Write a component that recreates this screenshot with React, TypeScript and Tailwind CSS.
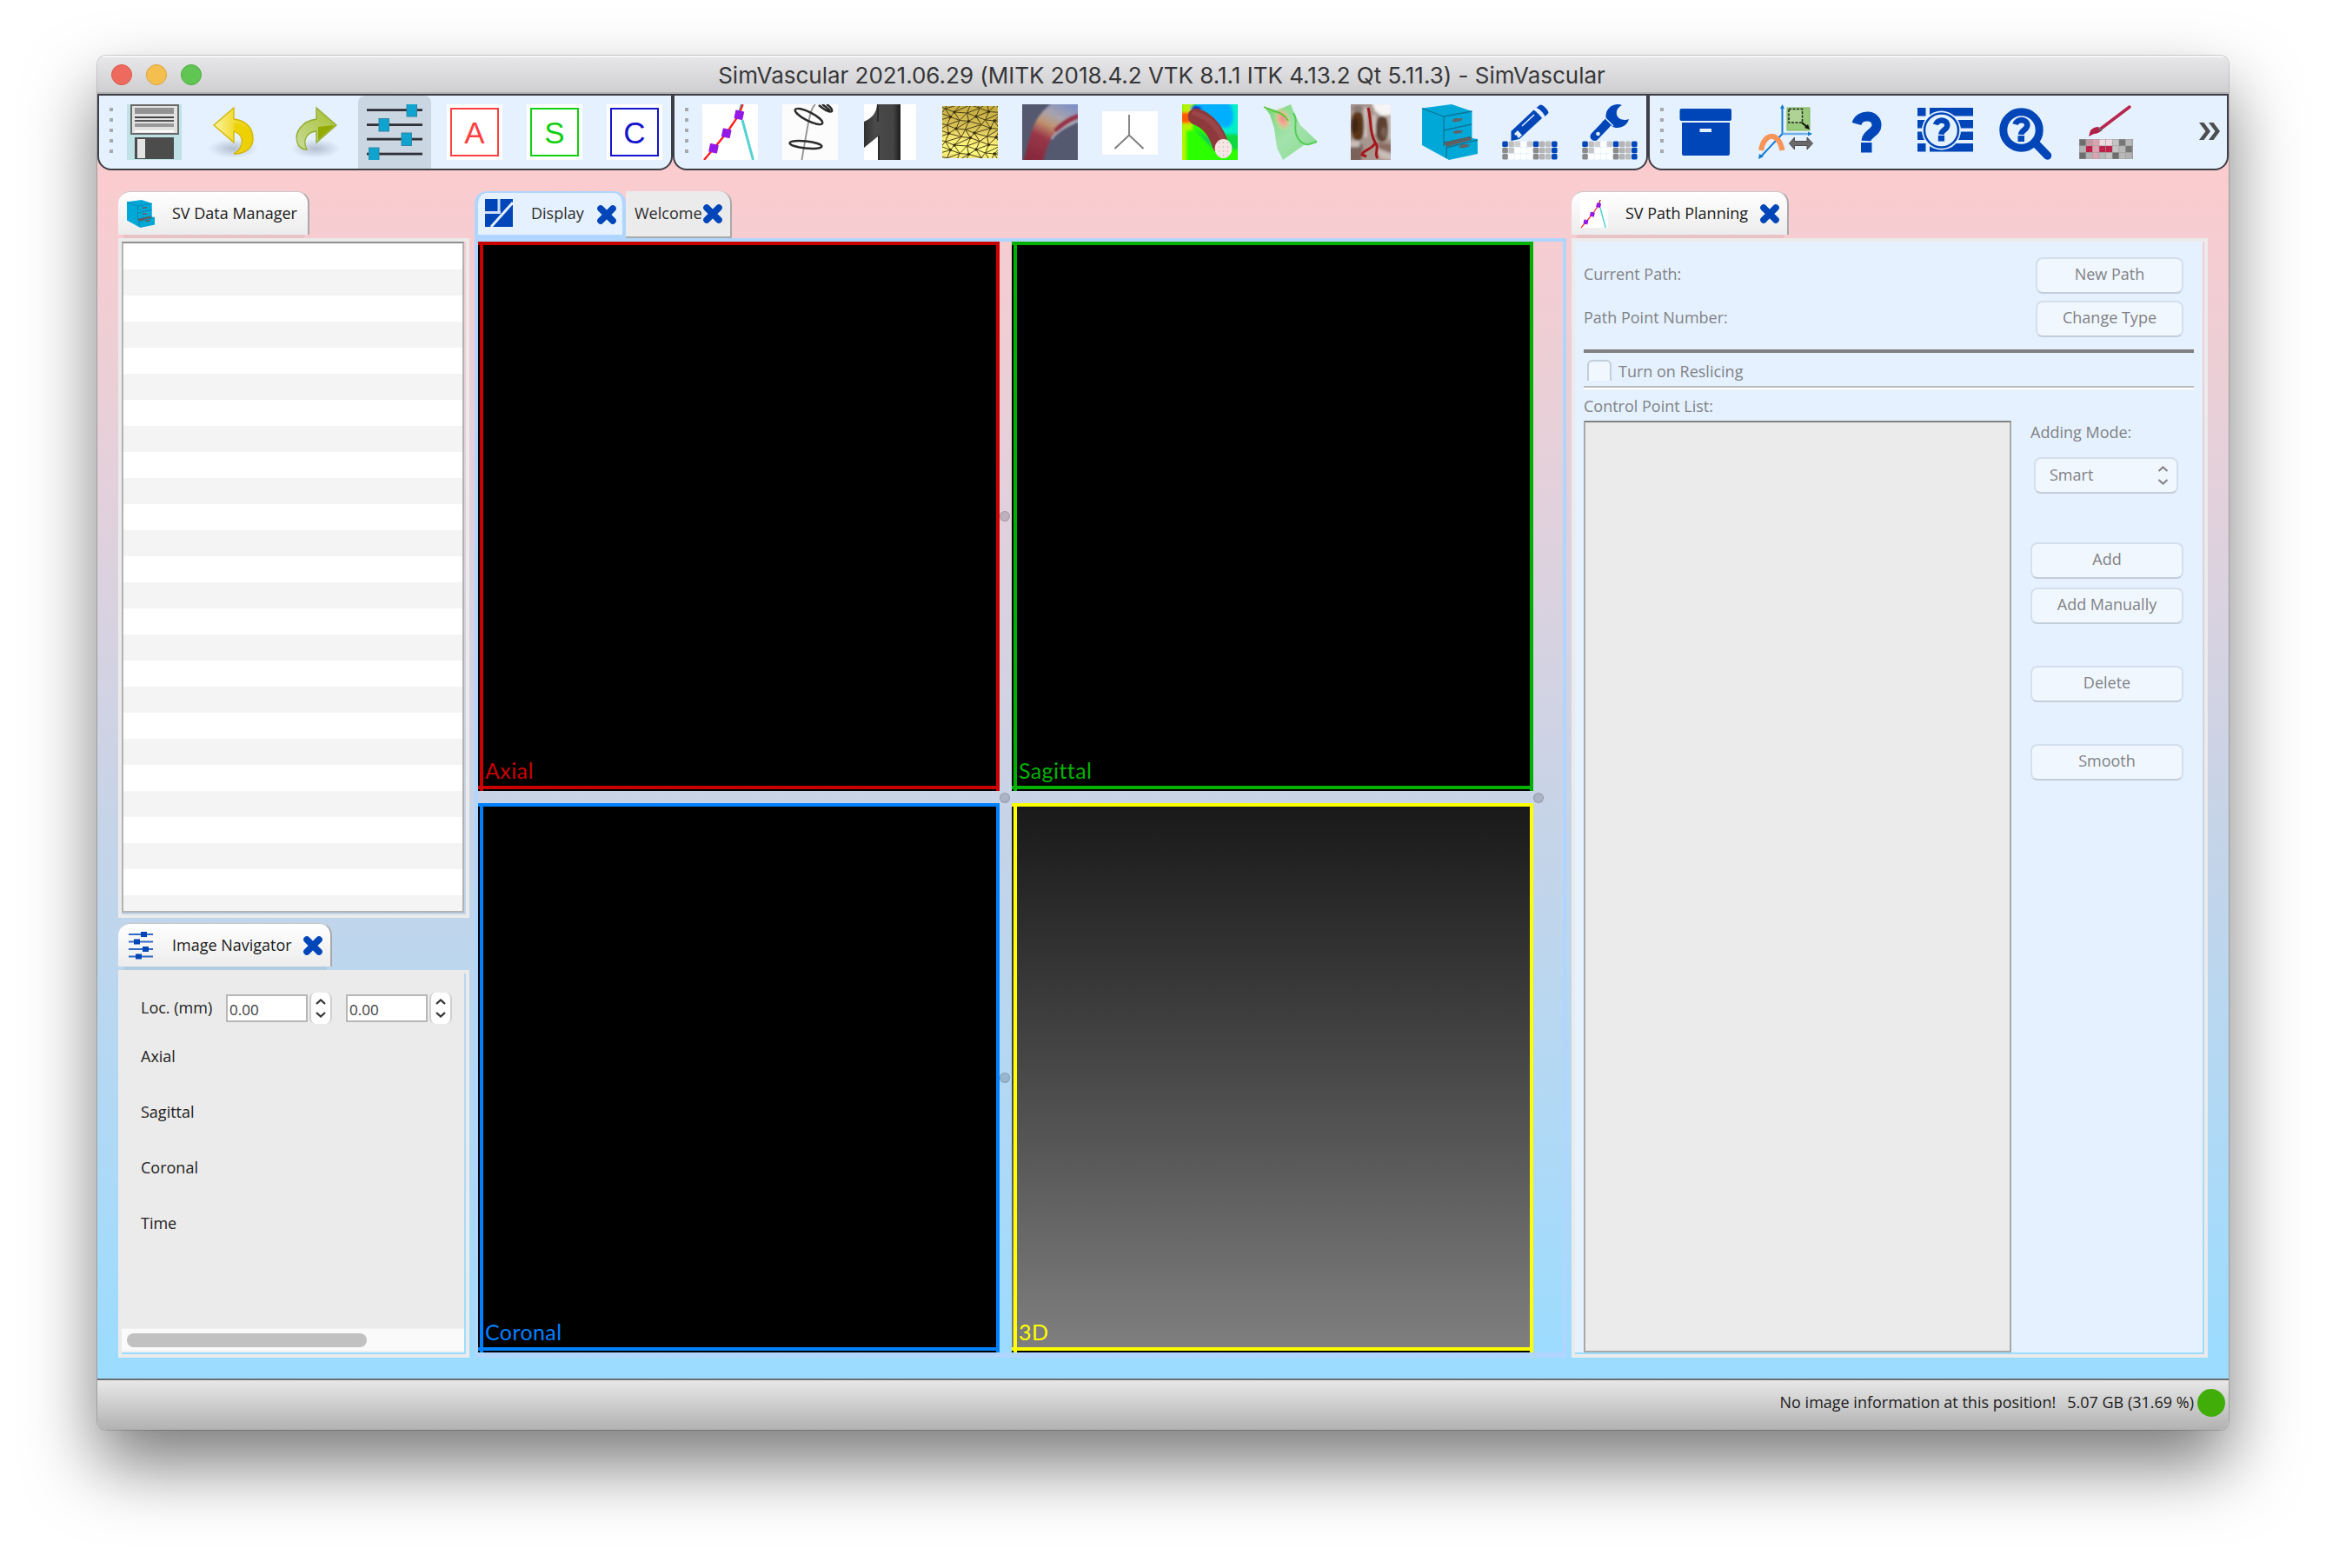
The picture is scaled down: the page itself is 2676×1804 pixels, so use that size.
import React from "react";

const BLUE = "#0046b8";

function Svg({ children, w = 64, h = 64, vb }: { children: React.ReactNode; w?: number; h?: number; vb?: string }) {
  return (
    <svg width={w} height={h} viewBox={vb ?? `0 0 ${w} ${h}`} className="block shrink-0">
      {children}
    </svg>
  );
}

/* ---------- toolbar icons ---------- */

const SaveIcon = () => (
  <Svg>
    <rect width="63" height="64" fill="#bfe2e6" />
    <rect x="5" y="1" width="54" height="33" fill="#e2e2e2" stroke="#6a6a6a" strokeWidth="2" />
    <rect x="9" y="4" width="45" height="7" fill="#929292" />
    <rect x="9" y="14" width="45" height="2" fill="#444" />
    <rect x="9" y="18" width="45" height="2" fill="#555" />
    <rect x="9" y="22" width="45" height="4" fill="#999" />
    <rect x="9" y="30" width="45" height="2" fill="#fff" />
    <rect x="9" y="38" width="45" height="25" fill="#4c4c4c" />
    <rect x="12" y="40" width="9" height="22" fill="#e4e4e4" />
  </Svg>
);

const UndoIcon = () => (
  <Svg>
    <defs>
      <radialGradient id="us"><stop offset="0" stopColor="#8b98a8" stopOpacity=".55" /><stop offset="1" stopColor="#8b98a8" stopOpacity="0" /></radialGradient>
      <linearGradient id="ug" x1="0" y1="0" x2="1" y2="0"><stop offset="0" stopColor="#fdf4a0" /><stop offset=".5" stopColor="#f2dc38" /><stop offset="1" stopColor="#e8cf00" /></linearGradient>
    </defs>
    <ellipse cx="30" cy="51" rx="29" ry="11" fill="url(#us)" />
    <path d="M8 24 L31 4 V17 C46 19 54 28 53 42 C52 51 43 57 31 57 C42 51 45 36 31 31 V44 Z" fill="url(#ug)" stroke="#d2b400" strokeWidth="1.3" />
    <path d="M31 31 C43 34 46 47 36 55 C48 52 52 44 51 36 C48 26 42 22 31 22 Z" fill="#ecd000" opacity=".8" />
  </Svg>
);

const RedoIcon = () => (
  <Svg>
    <defs>
      <radialGradient id="rs"><stop offset="0" stopColor="#8b98a8" stopOpacity=".55" /><stop offset="1" stopColor="#8b98a8" stopOpacity="0" /></radialGradient>
      <linearGradient id="rg" x1="0" y1="1" x2="1" y2="0"><stop offset="0" stopColor="#c9dc9a" /><stop offset="1" stopColor="#a5bf2b" /></linearGradient>
    </defs>
    <ellipse cx="33" cy="51" rx="29" ry="11" fill="url(#rs)" />
    <path d="M57 24 L34 4 V17 C18 19 8 32 12 44 C14 50 18 52 23 52 C18 42 22 32 34 31 V44 Z" fill="url(#rg)" stroke="#93ab2e" strokeWidth="1.3" />
    <path d="M55 24 L36 41 V26 Z" fill="#93ab00" />
  </Svg>
);

const SlidersIcon = () => (
  <Svg>
    {[[6.5, 46], [23.5, 14], [40, 40], [57, 2.5]].map(([y, x]) => (
      <g key={y}>
        <rect x="0" y={y - 1.3} width="64" height="2.8" fill="#2e3136" />
        <rect x={x} y={y - 7} width="11.5" height="14.5" fill="#0fa4cf" stroke="#2d86a5" strokeWidth="1" />
      </g>
    ))}
  </Svg>
);

function LetterIcon({ letter, color }: { letter: string; color: string }) {
  return (
    <div className="flex h-16 w-16 shrink-0 bg-white p-1">
      <div
        className="flex flex-1 items-center justify-center border-2 font-['Liberation_Sans',sans-serif] text-[35px] leading-none"
        style={{ borderColor: color, color }}
      >
        {letter}
      </div>
    </div>
  );
}

const PathShape = ({ s = 1 }: { s?: number }) => (
  <Svg w={64 * s} h={64 * s} vb="0 0 64 64">
    <rect width="64" height="64" fill="#fff" />
    <path d="M46 18 L53 44 L58.5 64 M45 0 L43 8" stroke="#55d2d2" strokeWidth="3" fill="none" />
    <path d="M2 64 L13 51 L27.5 33.5 L42 12.5 L46.5 0" stroke="#ff2020" strokeWidth="2.4" fill="none" />
    {[[13, 50.7], [27.7, 33.3], [42.3, 12.3]].map(([x, y]) => (
      <rect key={x} x={x - 5} y={y - 5} width="10" height="10" rx="1" fill="#9418e6" transform={`rotate(12 ${x} ${y})`} />
    ))}
  </Svg>
);

const SegIcon = () => (
  <Svg>
    <rect width="64" height="64" fill="#fcfcfc" />
    <path d="M38 0 C33 4 30.500 18 28 32 C26 44 24 54 22.500 64" stroke="#999" strokeWidth="2" fill="none" />
    <g fill="none" stroke="#2b2b2b" strokeWidth="2.500">
      <ellipse cx="30.500" cy="14" rx="17.500" ry="5" transform="rotate(27 30.500 14)" />
      <ellipse cx="27" cy="46.500" rx="18.500" ry="4" transform="rotate(6 27 46.500)" />
      <path d="M42 1 C48 6 54 10 57 8 C58 5 54 2 51 0 M46 0 L55 7" />
    </g>
  </Svg>
);

const ModelIcon = () => (
  <Svg>
    <defs>
      <linearGradient id="mg"><stop offset="0" stopColor="#303030" /><stop offset=".3" stopColor="#4a4a4a" /><stop offset=".8" stopColor="#444" /><stop offset="1" stopColor="#1c1c1c" /></linearGradient>
    </defs>
    <rect x="2" width="60" height="64" fill="#fff" />
    <path d="M2 20 C10 16 16 12 17 0 H44 V64 H18 V37 L2 50 Z" fill="url(#mg)" />
    <path d="M19 36 V64 M18 0 V20" stroke="#222" strokeWidth="1.500" />
  </Svg>
);

const meshPts = Array.from({ length: 9 }, (_, r) =>
  Array.from({ length: 8 }, (_, c) => [c * 11.500 - 9 + ((r * 5 + c * 3) % 4) + (r % 2) * 5, r * 9.500 - 18 + c * 3 + ((r * 3 + c * 7) % 3)]),
);

const MeshIcon = () => (
  <Svg>
    <defs>
      <linearGradient id="meg" x1=".6" y1="0" x2=".5" y2="1"><stop offset="0" stopColor="#c4ab40" /><stop offset=".45" stopColor="#dcc658" /><stop offset=".6" stopColor="#f4e270" /><stop offset=".85" stopColor="#ffff80" /><stop offset="1" stopColor="#f4e474" /></linearGradient>
      <clipPath id="mec"><rect y="2" width="64" height="60" /></clipPath>
    </defs>
    <g clipPath="url(#mec)">
      <rect y="2" width="64" height="60" fill="url(#meg)" />
      {meshPts.map((row, r) =>
        row.map(([x, y], c) => (
          <g key={`${r}-${c}`} stroke="#4a401a" strokeWidth="1" fill="none">
            {c < 7 && <path d={`M${x} ${y}L${row[c + 1][0]} ${row[c + 1][1]}`} />}
            {r < 8 && <path d={`M${x} ${y}L${meshPts[r + 1][c][0]} ${meshPts[r + 1][c][1]}`} />}
            {r < 8 && c > 0 && <path d={`M${x} ${y}L${meshPts[r + 1][c - 1][0]} ${meshPts[r + 1][c - 1][1]}`} />}
            {(r + c) % 2 === 0 && <circle cx={x} cy={y} r="1.300" fill="#221c08" />}
          </g>
        )),
      )}
    </g>
  </Svg>
);

const SimIcon = () => (
  <Svg>
    <defs>
      <linearGradient id="sg" x1=".25" y1="1" x2=".7" y2="0"><stop offset="0" stopColor="#84283c" /><stop offset=".38" stopColor="#983648" /><stop offset=".58" stopColor="#c0936f" /><stop offset=".74" stopColor="#a9a4ac" /><stop offset="1" stopColor="#7f8fc4" /></linearGradient>
      <filter id="sb"><feGaussianBlur stdDeviation="1.300" /></filter>
      <clipPath id="sc"><rect width="64" height="64" /></clipPath>
    </defs>
    <g clipPath="url(#sc)">
      <rect width="64" height="64" fill="#555970" />
      <g filter="url(#sb)">
        <path d="M1 68 C6 50 10 22 24 8 C30 2 34 -2 38 -4 H68 V17 C52 24 38 30 32 42 C28 50 26 60 23 68 Z" fill="url(#sg)" />
        <path d="M66 13 C54 17 46 22 38 31" stroke="#97304a" strokeWidth="6" fill="none" />
        <path d="M66 19 C50 25 40 31 34 40" stroke="#b9bccb" strokeWidth="1.800" fill="none" />
      </g>
    </g>
  </Svg>
);

const AxesIcon = () => (
  <Svg>
    <rect y="8" width="64" height="50" fill="#fff" />
    <path d="M31 12 V35.500 L14.500 51 M31 35.500 L47.500 51" stroke="#7c7c7c" strokeWidth="1.800" fill="none" />
  </Svg>
);

const FlowIcon = () => (
  <Svg>
    <defs><clipPath id="fc"><rect width="64" height="64" /></clipPath><filter id="fb"><feGaussianBlur stdDeviation="1.600" /></filter></defs>
    <g clipPath="url(#fc)">
      <rect width="64" height="64" fill="#2cff00" />
      <g filter="url(#fb)">
        <path d="M0 -2 H12 V30 H5 V66 H-2 Z" fill="#b6f400" />
        <path d="M-2 9 H10 V22 H-2 Z" fill="#ff5a00" />
        <path d="M14 -3 H68 V36 H36 Z" fill="#00efc8" />
        <path d="M66 34 H40 L52 52 H66 Z" fill="#10d840" />
        <path d="M20 -3 H54 C62 10 60 24 52 27 C40 28 26 14 20 8 Z" fill="#00b0ff" />
        <ellipse cx="16" cy="5" rx="6" ry="4" fill="#0030e0" />
        <path d="M14 28 L36 52 L32 40 Z" fill="#10c85c" />
      </g>
      <path d="M16 14 C30 19 40 32 44 47" stroke="#8e393c" strokeWidth="19" strokeLinecap="round" fill="none" />
      <path d="M14 10 C32 16 43 28 48 44" stroke="#a25052" strokeWidth="6" strokeLinecap="round" fill="none" opacity=".6" />
      <ellipse cx="47.500" cy="51" rx="10" ry="11" fill="#f6e6e6" />
      {[0, 1, 2, 3].map((r) => [0, 1, 2].map((c) => <circle key={`${r}${c}`} cx={42.500 + c * 5} cy={44 + r * 5} r=".8" fill="#d8aeb0" />))}
    </g>
  </Svg>
);

const SheetIcon = () => (
  <Svg>
    <defs>
      <linearGradient id="shg" x1="0" y1="0" x2="1" y2="1"><stop offset="0" stopColor="#74d674" /><stop offset=".5" stopColor="#a4e2ae" /><stop offset="1" stopColor="#86dd8c" /></linearGradient>
      <radialGradient id="shr"><stop offset="0" stopColor="#ea8f8f" /><stop offset=".45" stopColor="#ecb290" /><stop offset="1" stopColor="#cfe59a" stopOpacity="0" /></radialGradient>
    </defs>
    <path d="M2 2.500 L17 7 L33 0 L37 10 L44 24 L64 43 L48 47 L24 64 L17 50 L14 28 L9 12 Z" fill="url(#shg)" />
    <ellipse cx="23.500" cy="17" rx="10" ry="15" fill="url(#shr)" transform="rotate(-20 23.500 17)" />
    <path d="M2 3 L14 8 C20 9 27 13 30 19" stroke="#5fc43a" strokeWidth="1.800" fill="none" />
    <path d="M36 10 C42 20 36 22 39 34 C42 43 48 47 54 46 L63 43" stroke="#53cc52" strokeWidth="2" fill="none" />
  </Svg>
);

const TissueIcon = () => (
  <div className="flex h-16 w-16 shrink-0 justify-center pl-[2px]">
    <Svg w={46}>
      <defs><filter id="tb"><feGaussianBlur stdDeviation="1.500" /></filter><clipPath id="tc"><rect width="46" height="64" /></clipPath></defs>
      <g clipPath="url(#tc)">
        <rect width="46" height="64" fill="#a8978f" />
        <g filter="url(#tb)">
          <path d="M24 -2 H48 V12 L36 14 L28 8 Z" fill="#f6f4f4" />
          <path d="M-2 44 L14 46 L12 66 H-2 Z" fill="#7a625a" />
          <path d="M-2 42 H10 V49 H-2 Z M30 50 L48 58 V64 L34 62 Z" fill="#c9bdb9" />
          <path d="M30 44 L48 46 V56 L34 52 Z" fill="#8a6c62" />
          <ellipse cx="8" cy="25" rx="8" ry="17" fill="#5a3419" />
          <ellipse cx="5" cy="24" rx="4" ry="9" fill="#3f2514" />
          <ellipse cx="36" cy="28" rx="7.500" ry="15" fill="#5c4031" />
          <ellipse cx="38" cy="32" rx="3" ry="6" fill="#7a6254" />
          <path d="M17 4 V38 M27 12 V34 M45 14 V40" stroke="#d9d0cc" strokeWidth="3" />
          <ellipse cx="8" cy="5" rx="6" ry="4" fill="#8a7c78" />
        </g>
        <path d="M20 4 C24 18 21 32 28 44 C26 52 14 52 13 58 L18 60 M28 44 C34 50 26 56 31 62" stroke="#a5171c" strokeWidth="3" fill="none" />
      </g>
    </Svg>
  </div>
);

const CabinetShape = ({ s = 1 }: { s?: number }) => (
  <Svg w={64 * s} h={64 * s} vb="0 0 64 64">
    <path d="M0 4.500 L34 0 L57.500 8 V39 L64 40 V57 L31 64 L0 47 Z" fill="#00a8d8" />
    <path d="M0 4.500 L25 14 L57.500 8 M25 14 V48 M25 30 L57 23 M25 44 L57 38 M28 49 V62 M28 50 L64 41" stroke="#0d7597" strokeWidth="1.300" fill="none" />
    <path d="M25 44 L55 37 L57 41 L28 49 Z" fill="#5d5f62" />
    <g fill="#606468">
      <path d="M34 19 L38 16 H47 L45 19 L38 20.500 Z" />
      <path d="M35 32 L39 30 H47 L45 33 L38 34 Z" />
      <path d="M42 49 L46 46 H55 L53 49 L46 50.500 Z" />
    </g>
  </Svg>
);

const cellCols = [
  [BLUE, "#8a8a8a", "#8a8a8a"],
  ["#bdbdbd", "#c4c4c4", "#fff"],
  ["#cfcfcf", "#fff", "#fff"],
  ["#fff", "#fff", "#fff"],
  ["#c9c9c9", "#fff", "#fff"],
  [BLUE, "#8a8a8a", "#8a8a8a"],
  ["#b4b4b4", "#b4b4b4", "#b4b4b4"],
  ["#bdbdbd", "#bdbdbd", "#bdbdbd"],
  [BLUE, BLUE, BLUE],
];

const Cells = () => (
  <g>
    {cellCols.map((col, c) =>
      col.map((f, r) => <rect key={`${c}${r}`} x={c * 7.100 + 0.300} y={42.500 + r * 7.200} width="6.500" height="6.500" rx="1.500" fill={f} />),
    )}
  </g>
);

const PencilIcon = () => (
  <Svg>
    <Cells />
    <g fill={BLUE}>
      <path d="M10.500 42 L10.500 31 L36.500 6.500 C39 8 45 14 46 16 L20 40 Z" />
      <path d="M39.500 4 L44 0.500 C47 0 54 7 53.500 10 L49.500 14 C48 10 43 5 39.500 4 Z" />
    </g>
    <path d="M14 34 L18 30 L23 35.500 L19 39 Z" fill="#e4f1ff" />
    <path d="M14 38 L17 35 L18.500 40 Z" fill={BLUE} />
    <path d="M23 25 L37 12" stroke="#e4f1ff" strokeWidth="1.600" />
  </Svg>
);

const WrenchIcon = () => (
  <Svg>
    <Cells />
    <path d="M14.500 37 L28 23" stroke={BLUE} strokeWidth="10" strokeLinecap="round" />
    <path d="M26 24 L34 16" stroke={BLUE} strokeWidth="9" />
    <path d="M46 1 A13.500 13.500 0 1 0 54 17 C49 19 42 18 40 12 C39 7 42 3 46 1 Z" fill={BLUE} />
    <path d="M27 16 L36 25" stroke="#e4f1ff" strokeWidth="1.400" />
    <circle cx="18.500" cy="34" r="2.300" fill="#e4f1ff" />
  </Svg>
);

const ArchiveIcon = () => (
  <Svg>
    <rect x="2.500" y="5" width="59.500" height="14" rx="2" fill={BLUE} />
    <path d="M5 21 H60 V57 Q60 59 58 59 H7 Q5 59 5 57 Z M25.500 28 V32 H39 V28 Z" fill={BLUE} fillRule="evenodd" />
  </Svg>
);

const TransformIcon = () => (
  <Svg>
    <rect x="34" y="4" width="26" height="26" fill="#9aca7c" stroke="#7bb657" strokeWidth="1" />
    <rect x="36" y="5.500" width="15.500" height="15.500" fill="#aed394" stroke="#222" strokeWidth="1.500" strokeDasharray="3 1.500" />
    <path d="M51 21 L58 27" stroke="#111" strokeWidth="2" />
    <path d="M60 29 L54 27 L58 23 Z" fill="#111" />
    <path d="M28.500 2 V34 L3 61" stroke="#157bd0" strokeWidth="2" fill="none" />
    <path d="M29 34 H61" stroke="#6bb1e6" strokeWidth="2.600" />
    <path d="M28.500 0 L31 5 H26 Z M63 34 L58 31.500 V36.500 Z M1 63 L2 57 L7 60 Z" fill="#157bd0" />
    <path d="M4 53 C7 33 24 30 28.500 53" stroke="#f79457" strokeWidth="6" fill="none" />
    <path d="M36.500 45 L42.500 38 V42.500 H57 V38 L63.500 45 L57 52 V47.500 H42.500 V52 Z" fill="#6a6a6a" stroke="#4e4e4e" strokeWidth="1" />
  </Svg>
);

const Question = ({ x, y, k, fill = BLUE }: { x: number; y: number; k: number; fill?: string }) => (
  <g transform={`translate(${x} ${y}) scale(${k})`}>
    <path d="M5 14.500 C8 3 28 3 28 16 C28 25 16.500 25 16 34" stroke={fill} strokeWidth="11" fill="none" />
    <rect x="10" y="36" width="12.500" height="11.500" fill={fill} />
  </g>
);

const HelpIcon = () => (
  <Svg>
    <Question x={17} y={8} k={1} />
  </Svg>
);

const ContextHelpIcon = () => (
  <Svg>
    <g fill={BLUE}>
      {[4, 18, 31.500, 45].map((y) => (
        <g key={y}>
          <rect x="0" y={y} width="9.500" height="9.500" />
          <rect x="14" y={y} width="50" height="9.500" />
        </g>
      ))}
    </g>
    <circle cx="27.500" cy="30" r="22.500" fill="#e4f1ff" />
    <circle cx="27.500" cy="30" r="19.500" fill="none" stroke={BLUE} strokeWidth="2.500" />
    <Question x={18} y={15} k={0.58} />
  </Svg>
);

const SearchHelpIcon = () => (
  <Svg>
    <circle cx="27.500" cy="29.500" r="20.700" fill="none" stroke={BLUE} strokeWidth="9" />
    <path d="M43 44 L57.500 59" stroke={BLUE} strokeWidth="9.500" strokeLinecap="round" />
    <Question x={17.500} y={14.500} k={0.6} />
  </Svg>
);

const brushCells = [
  ["#6e6e6e", "#c39aa4", "#dca2b2", "#efd9e0", "#efd9e0", "#c4c4c4", "#767676", "#b8b8b8"],
  ["#b2b2b2", "#c01f49", "#dca2b2", "#c01f49", "#c01f49", "#c4c4c4", "#b8b8b8", "#767676"],
  ["#6e6e6e", "#b2b2b2", "#dca2b2", "#b8b8b8", "#c4c4c4", "#6e6e6e", "#b8b8b8", "#b2b2b2"],
];

const BrushIcon = () => (
  <Svg>
    <rect x="2" y="40" width="62" height="23" fill="#9c9c9c" />
    {brushCells.map((row, r) =>
      row.map((f, c) => <rect key={`${r}${c}`} x={2.500 + c * 7.600} y={40.500 + r * 7.600} width="7" height="7" fill={f} />),
    )}
    <path d="M27 28 L60 3" stroke="#b9264c" strokeWidth="3.500" strokeLinecap="round" />
    <path d="M13 37 L15 30 Q19 26 24 26 L28 30 Q24 34 19 34 Z" fill="#b01f45" />
    <path d="M24.500 27 L28 30.500" stroke="#6b6b6b" strokeWidth="2" />
  </Svg>
);

/* ---------- small parts ---------- */

const CloseX = () => (
  <Svg w={24} h={24}>
    <path d="M5 5 L19 19 M19 5 L5 19" stroke={BLUE} strokeWidth="7.600" strokeLinecap="round" />
  </Svg>
);

const DisplayIcon = () => (
  <Svg w={32} h={32}>
    <rect width="32" height="32" fill={BLUE} />
    <path d="M0 15.500 H18 M16 0 V15.500" stroke="#cfe0f8" strokeWidth="3" />
    <path d="M32 4 L7 32" stroke="#e4f1ff" strokeWidth="3" />
  </Svg>
);

const NavigatorIcon = () => (
  <Svg w={28} h={32}>
    {[[3, 14], [11.500, 6], [20, 16], [28.500, 8]].map(([y, x]) => (
      <g key={y} fill={BLUE}>
        <rect y={y - 1} width="28" height="2" opacity=".8" />
        <rect x={x} y={y - 3} width="7" height="6" />
      </g>
    ))}
  </Svg>
);

function Toolbar({ children, className }: { children: React.ReactNode; className: string }) {
  return (
    <div className={`flex h-[88px] shrink-0 rounded-b-[16px] border-2 border-[#3e3e46] bg-[#e5f1ff] ${className}`}>
      <div className="flex w-1 shrink-0 flex-col gap-2 pt-[14px]">
        {[0, 1, 2, 3, 4].map((i) => (
          <div key={i} className="h-1 w-1 bg-[#a6a9ae]" />
        ))}
      </div>
      {children}
    </div>
  );
}

const Tool = ({ children, active = false }: { children: React.ReactNode; active?: boolean }) => (
  <div className={`flex h-[84px] w-[84px] shrink-0 justify-center pt-[10px] ${active ? "rounded-t-[8px] bg-[#cbd6e3]" : ""}`}>{children}</div>
);

const SpinArrows = ({ color, w = 14 }: { color: string; w?: number }) => (
  <Svg w={w} h={24} vb="0 0 14 24">
    <path d="M2 7 L7 2.500 L12 7 M2 17 L7 21.500 L12 17" stroke={color} strokeWidth="2.300" fill="none" />
  </Svg>
);

const Spin = () => (
  <div className="flex items-center">
    <div className="h-8 w-[94px] border-2 border-[#b7b7b7] bg-white pl-[2px] text-[17px] leading-[31px] text-[#3a3a3a]">0.00</div>
    <div className="ml-[2px] flex h-9 w-[26px] items-center justify-center rounded-[7px] border-x-2 border-[#cfcfcf] bg-white">
      <SpinArrows color="#333" />
    </div>
  </div>
);

const PanelTab = ({ children, className }: { children: React.ReactNode; className: string }) => (
  <div>
    <div
      className={`flex h-[50px] items-center rounded-t-[14px] border-r-2 border-t border-r-[#a9a9a9] border-t-[#c9c9c9] bg-linear-to-b from-white to-[#ececec] text-[18px] text-[#1a1a1a] ${className}`}
    >
      {children}
    </div>
    <div className={`h-1 ${className} !px-0`}>
      <div className="mx-[6px] h-full bg-black/5" />
    </div>
  </div>
);

const Btn = ({ children, className = "" }: { children: React.ReactNode; className?: string }) => (
  <div
    className={`flex h-[42px] shrink-0 items-center justify-center rounded-[8px] border-2 border-[#d3dfec] border-b-[#c3cedb] bg-[#f1f7ff] pb-[4px] text-[18px] text-[#808284] ${className}`}
  >
    {children}
  </div>
);

const Knob = ({ className = "" }: { className?: string }) => (
  <div className={`h-3 w-3 shrink-0 rounded-full border border-black/15 bg-black/15 ${className}`} />
);

function Viewport({ label, frame, fill, text }: { label: string; frame: string; fill: string; text: string }) {
  return (
    <div className={`flex h-[632px] shrink-0 flex-col ${fill}`}>
      <div className={`h-1 ${frame}`} />
      <div className="flex flex-1 pl-[2px]">
        <div className={`w-1 ${frame}`} />
        <div className={`flex flex-1 items-end pl-[2px] font-['Lato','Liberation_Sans',sans-serif] text-[25px] font-normal leading-[36px] tracking-[0.4px] ${text}`}>{label}</div>
        <div className={`w-1 ${frame}`} />
      </div>
      <div className={`h-1 ${frame}`} />
      <div className="flex h-[2px] justify-between bg-black pl-[2px]">
        <div className={`w-1 ${frame}`} />
        <div className={`w-1 ${frame}`} />
      </div>
    </div>
  );
}

/* ---------- page ---------- */

export default function App() {
  return (
    <div className="h-[1804px] w-[2676px] overflow-hidden bg-white pl-[112px] pt-[64px] font-['Open_Sans',sans-serif] leading-6">
      <div className="flex h-[1581px] w-[2452px] flex-col overflow-hidden rounded-[10px] shadow-[0_0_0_1px_rgba(0,0,0,0.16),0_40px_80px_rgba(0,0,0,0.52)]">
        {/* title bar */}
        <div className="flex h-[44px] shrink-0 items-center border-b-2 border-t-2 border-b-[#b3b3b5] border-t-[#f6f6f6] bg-linear-to-b from-[#e7e7e9] to-[#cfcfd1] pl-4">
          <div className="flex w-[114px] gap-4">
            <div className="h-6 w-6 rounded-full border border-[#d9554a] bg-[#ee6a5f]" />
            <div className="h-6 w-6 rounded-full border border-[#dba23c] bg-[#f5bf4f]" />
            <div className="h-6 w-6 rounded-full border border-[#4fab42] bg-[#61c554]" />
          </div>
          <div className="flex-1 pr-[133px] pt-[1px] text-center font-['Inter',sans-serif] text-[26px] leading-[39px] tracking-[-0.02px] text-[#363638]">
            SimVascular 2021.06.29 (MITK 2018.4.2 VTK 8.1.1 ITK 4.13.2 Qt 5.11.3) - SimVascular
          </div>
        </div>

        <div className="flex h-[1478px] shrink-0 flex-col bg-linear-to-b from-[#ffcbcc] from-[2%] via-[#c6d4e8] via-[57%] to-[#9bdcff] to-[99%]">
          {/* toolbars */}
          <div className="flex">
            <Toolbar className="w-[662px] pl-3">
              <div className="ml-[6px] flex gap-2">
                <Tool><SaveIcon /></Tool>
                <Tool><UndoIcon /></Tool>
                <Tool><RedoIcon /></Tool>
                <Tool active><SlidersIcon /></Tool>
                <Tool><LetterIcon letter="A" color="#ff4040" /></Tool>
                <Tool><LetterIcon letter="S" color="#10d010" /></Tool>
                <Tool><LetterIcon letter="C" color="#1414cc" /></Tool>
              </div>
            </Toolbar>
            <Toolbar className="w-[1122px] pl-3">
              <div className="ml-[6px] flex gap-2">
                <Tool><PathShape /></Tool>
                <Tool><SegIcon /></Tool>
                <Tool><ModelIcon /></Tool>
                <Tool><MeshIcon /></Tool>
                <Tool><SimIcon /></Tool>
                <Tool><AxesIcon /></Tool>
                <Tool><FlowIcon /></Tool>
                <Tool><SheetIcon /></Tool>
                <Tool><TissueIcon /></Tool>
                <Tool><CabinetShape /></Tool>
                <Tool><PencilIcon /></Tool>
                <Tool><WrenchIcon /></Tool>
              </div>
            </Toolbar>
            <Toolbar className="w-[668px] pl-3">
              <div className="ml-[6px] flex gap-2">
                <Tool><ArchiveIcon /></Tool>
                <Tool><TransformIcon /></Tool>
                <Tool><HelpIcon /></Tool>
                <Tool><ContextHelpIcon /></Tool>
                <Tool><SearchHelpIcon /></Tool>
                <Tool><BrushIcon /></Tool>
              </div>
              <div className="ml-auto pr-[6px] pt-[30px]">
                <Svg w={28} h={22}>
                  <path d="M2 1 H7.500 L15 11 L7.500 21 H2 L9.500 11 Z M13 1 H18.500 L26 11 L18.500 21 H13 L20.500 11 Z" fill="#4e4e4e" />
                </Svg>
              </div>
            </Toolbar>
          </div>

          <div className="flex gap-[6px] pl-6 pt-6">
            {/* left column */}
            <div className="w-[404px]">
              <PanelTab className="w-[220px] pl-[10px]">
                <CabinetShape s={0.5} />
                <span className="ml-[20px] whitespace-nowrap pb-[2px]">SV Data Manager</span>
              </PanelTab>
              <div className="flex h-[782px] flex-col border-4 border-[#ebebeb] pb-[2px] pr-[2px]">
                <div className="flex flex-1 flex-col overflow-hidden border-2 border-[#b2b2b2] border-t-[#8f8f8f] bg-white">
                  {Array.from({ length: 26 }, (_, i) => (
                    <div key={i} className={`h-[30px] shrink-0 ${i % 2 ? "bg-[#f4f4f4]" : "bg-white"}`} />
                  ))}
                </div>
              </div>

              <div className="pt-[6px]">
                <PanelTab className="w-[246px] pl-3">
                  <NavigatorIcon />
                  <span className="ml-[22px] flex-1 whitespace-nowrap pb-[2px]">Image Navigator</span>
                  <div className="pr-2"><CloseX /></div>
                </PanelTab>
              </div>
              <div className="flex h-[446px] flex-col border-4 border-[#ebebeb] pb-[2px] pr-[2px]">
                <div className="flex flex-1 flex-col bg-[#ebebeb] pt-[22px] text-[18px] text-[#222]">
                  <div className="flex h-9 items-center pl-[22px]">
                    <span className="w-[98px] whitespace-nowrap pb-[2px]">Loc. (mm)</span>
                    <Spin />
                    <div className="w-4" />
                    <Spin />
                  </div>
                  <div className="flex flex-col gap-[40px] pl-[22px] pt-[25px]">
                    <div>Axial</div>
                    <div>Sagittal</div>
                    <div>Coronal</div>
                    <div>Time</div>
                  </div>
                  <div className="mt-auto flex h-7 items-center border-b-2 border-t border-[#f0f0f0] bg-[#fafafa] pl-[6px]">
                    <div className="h-4 w-[276px] rounded-full bg-[#c1c1c1]" />
                  </div>
                </div>
              </div>
            </div>

            {/* editor area */}
            <div className="w-[1256px]">
              <div className="flex h-[54px] text-[18px] text-[#2c2c2c]">
                <div className="flex h-[54px] w-[174px] items-start rounded-t-[14px] border-4 border-t-2 border-b-4 border-[#b0d5ff] bg-[#e5f1ff] pl-2">
                  <div className="flex h-[46px] flex-1 items-center">
                    <DisplayIcon />
                    <span className="ml-[21px] flex-1 pb-[1px]">Display</span>
                    <div className="pr-[6px] pt-1"><CloseX /></div>
                  </div>
                </div>
                <div className="flex h-[54px] w-[122px] items-center rounded-tr-[14px] border-b-2 border-r-2 border-[#a9a9a9] bg-[#ebebeb] pl-[10px]">
                  <span className="w-[78px] pb-[3px]">Welcome</span>
                  <div><CloseX /></div>
                </div>
              </div>
              <div className="flex h-[1288px] flex-col border-4 border-b-[6px] border-[#b0d5ff]">
                <div className="flex flex-1">
                  <div className="flex w-[600px] flex-col gap-[14px]">
                    <Viewport label="Axial" frame="bg-[#c80000]" fill="bg-black" text="text-[#c80000]" />
                    <Viewport label="Coronal" frame="bg-[#0080ff]" fill="bg-black" text="text-[#0080ff]" />
                  </div>
                  <div className="flex w-[14px] flex-col">
                    <Knob className="mt-[310px]" />
                    <Knob className="mt-[312px]" />
                    <Knob className="mt-[310px]" />
                  </div>
                  <div className="flex w-[600px] flex-col gap-[14px]">
                    <Viewport label="Sagittal" frame="bg-[#00b000]" fill="bg-black" text="text-[#00b000]" />
                    <Viewport label="3D" frame="bg-[#ffff00]" fill="bg-linear-to-b from-[#191919] to-[#808080]" text="text-[#ffff00]" />
                  </div>
                  <Knob className="mt-[634px]" />
                </div>
              </div>
            </div>

            {/* path planning */}
            <div className="w-[732px]">
              <PanelTab className="w-[250px] pl-[10px]">
                <PathShape s={0.5} />
                <span className="ml-[20px] flex-1 whitespace-nowrap pb-[2px]">SV Path Planning</span>
                <div className="pr-2"><CloseX /></div>
              </PanelTab>
              <div className="flex h-[1288px] border-4 border-[#ebebeb] pb-[2px] pr-[2px]">
                <div className="flex flex-1 flex-col bg-[#e5f1ff] pl-[10px] pt-[18px] text-[18px] text-[#808284]">
                  <div className="flex w-[690px] items-center justify-between">
                    <span className="pb-1">Current Path:</span>
                    <Btn className="w-[170px]">New Path</Btn>
                  </div>
                  <div className="mt-2 flex w-[690px] items-center justify-between">
                    <span className="pb-1">Path Point Number:</span>
                    <Btn className="w-[170px]">Change Type</Btn>
                  </div>
                  <div className="mt-[14px] h-1 w-[702px] shrink-0 bg-[#808080]" />
                  <div className="mt-2 flex h-6 items-center pl-1">
                    <div className="h-6 w-7 rounded-t-[6px] border-2 border-b-0 border-[#c3ced9] bg-[#f1f7ff]" />
                    <span className="ml-[8px] pt-[2px]">Turn on Reslicing</span>
                  </div>
                  <div className="mt-[6px] h-1 w-[702px] shrink-0 border-t-2 border-[#b9babb] bg-white" />
                  <div className="mt-[7px] leading-6">Control Point List:</div>
                  <div className="mt-[5px] flex flex-1">
                    <div className="w-[492px] border-2 border-[#a8a8a8] border-t-[#808080] bg-[#ebebeb]" />
                    <div className="ml-[22px] w-[176px]">
                      <div className="flex h-[42px] items-start pt-[1px]">Adding Mode:</div>
                      <div className="ml-1 flex h-[42px] w-[166px] items-center justify-between rounded-[8px] border-2 border-[#d3dfec] border-b-[#c3cedb] bg-[#f1f7ff] pl-4 pr-[8px]">
                        <span className="pb-[2px]">Smart</span>
                        <SpinArrows color="#85878a" w={15} />
                      </div>
                      <Btn className="mt-[56px]">Add</Btn>
                      <Btn className="mt-[10px]">Add Manually</Btn>
                      <Btn className="mt-[48px]">Delete</Btn>
                      <Btn className="mt-[48px]">Smooth</Btn>
                    </div>
                  </div>
                </div>
              </div>
            </div>
          </div>
        </div>

        {/* status bar */}
        <div className="flex flex-1 items-center justify-end border-t-2 border-[#6d6d72] bg-linear-to-b from-[#e8e8e8] to-[#b2b2b2] pb-[6px] pr-1 text-[18px] text-[#1c1c1c]">
          <span className="pb-[2px]">No image information at this position!</span>
          <span className="ml-[13px] mr-1 pb-[2px]">5.07 GB (31.69 %)</span>
          <div className="h-8 w-8 rounded-full bg-[#41ad08]" />
        </div>
      </div>
    </div>
  );
}
